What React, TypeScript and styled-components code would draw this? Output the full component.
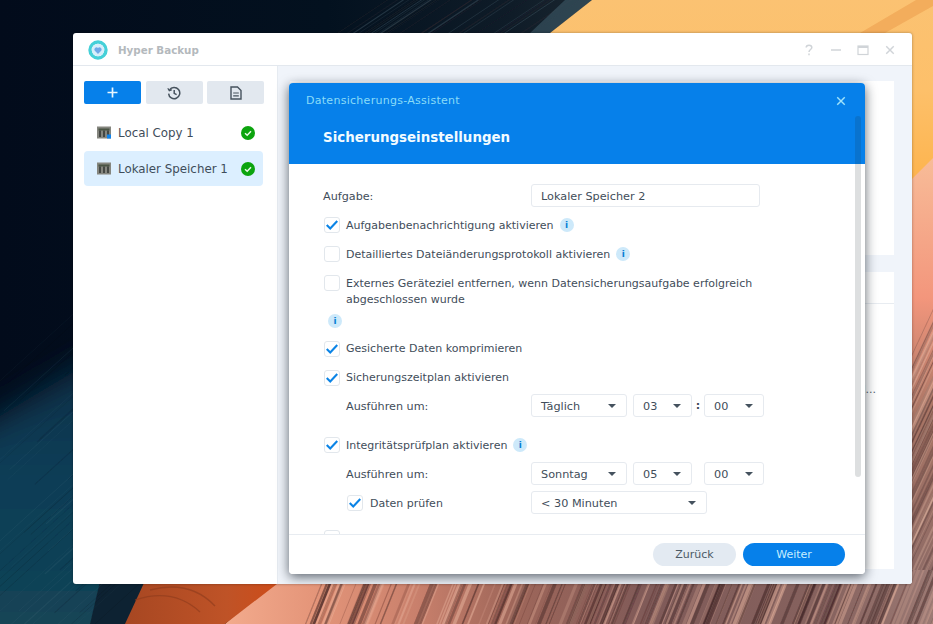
import React from "react";
import styled, { createGlobalStyle } from "styled-components";

const Global = createGlobalStyle`
  html, body { margin: 0; padding: 0; height: 100%; overflow: hidden; background: #03101f; }
  #root { height: 100%; }
  * { box-sizing: border-box; }
  body { font-family: "DejaVu Sans", Verdana, sans-serif; font-size: 12px; color: #3f4d5a; }
`;

const Desktop = styled.div`
  position: relative;
  width: 933px;
  height: 624px;
  overflow: hidden;
`;
const WallpaperSvg = styled.svg`
  position: absolute;
  inset: 0;
  display: block;
`;
const Win = styled.div`
  position: absolute;
  left: 73px;
  top: 33px;
  width: 839px;
  height: 551px;
  background: #fff;
  border-radius: 3px;
  display: flex;
  flex-direction: column;
  box-shadow: 0 0 3px rgba(0, 0, 0, 0.35);
  overflow: hidden;
`;
const TitleBar = styled.header`
  height: 33px;
  flex: none;
  display: flex;
  align-items: center;
  padding: 2px 15px 0 15px;
  gap: 10px;
  border-bottom: 1px solid #e3e8ee;
`;
const AppTitle = styled.span`
  font-size: 10.3px;
  font-weight: 700;
  color: #b4b9bd;
  flex: 1;
`;
const WinControls = styled.div`
  display: flex;
  align-items: center;
  gap: 13px;
`;
const WinBody = styled.div`
  flex: 1;
  display: flex;
  min-height: 0;
`;
const Sidebar = styled.aside`
  width: 205px;
  flex: none;
  padding: 15px 14px 0 11px;
  border-right: 1px solid #e6ebf1;
`;
const ToolRow = styled.div`
  display: grid;
  grid-template-columns: 57px 57px 57px;
  gap: 4.5px;
  margin-bottom: 11px;
`;
const ToolButton = styled.button<{ $primary?: boolean }>`
  height: 23px;
  border: 0;
  padding: 0;
  border-radius: 2px;
  display: flex;
  align-items: center;
  justify-content: center;
  background: ${(p) => (p.$primary ? "#0680ea" : "#e2e8ef")};
`;
const TaskItem = styled.div<{ $selected?: boolean }>`
  width: 179px;
  height: 35px;
  margin-bottom: 1px;
  padding: 0 8px 0 13px;
  border-radius: 4px;
  display: flex;
  align-items: center;
  gap: 7px;
  background: ${(p) => (p.$selected ? "#dcefff" : "transparent")};
`;
const TaskName = styled.span`
  flex: 1;
  font-size: 11.85px;
  white-space: nowrap;
  color: #3f4d5a;
`;
const Content = styled.main`
  flex: 1;
  background: #f0f4fa;
  padding: 15px 18px 15px 12px;
  display: flex;
  flex-direction: column;
  gap: 17px;
`;
const TopPanel = styled.section`
  height: 174px;
  flex: none;
  background: #fff;
`;
const BottomPanel = styled.section`
  flex: 1;
  background: #fff;
  padding-top: 31px;
`;
const PanelBody = styled.div`
  border-top: 1px solid #e8ecf1;
  padding: 79px 18px 0 0;
  text-align: right;
  font-size: 11px;
  line-height: 14px;
  color: #58656f;
`;

const Modal = styled.div`
  position: absolute;
  left: 216px;
  top: 50px;
  width: 576px;
  height: 491px;
  background: #fff;
  border-radius: 4px;
  display: flex;
  flex-direction: column;
  overflow: hidden;
  box-shadow: 0 3px 12px rgba(10, 20, 30, 0.65);
`;
const ModalHead = styled.header`
  height: 81px;
  flex: none;
  background: #0680ea;
  padding: 10px 17px 0 17px;
`;
const HeadTop = styled.div`
  display: flex;
  align-items: center;
  justify-content: space-between;
  height: 15px;
  font-size: 11px;
  letter-spacing: 0.28px;
  color: #8adcf8;
`;
const ModalTitle = styled.h1`
  margin: 20px 0 0 17px;
  font-size: 13.4px;
  line-height: 20px;
  font-weight: 700;
  color: #f2fbff;
`;
const Scrollbar = styled.div`
  position: absolute;
  top: 33px;
  right: 4px;
  width: 6px;
  height: 361px;
  border-radius: 3px;
  background: rgba(30, 40, 50, 0.15);
`;
const ModalBody = styled.div`
  flex: 1;
  min-height: 0;
  overflow: hidden;
  padding: 20px 34px 0;
  display: flex;
  flex-direction: column;
  gap: 6px;
`;
const FieldRow = styled.div<{ $gapTop?: number; $indent?: boolean }>`
  min-height: 23px;
  flex: none;
  display: flex;
  align-items: center;
  margin-top: ${(p) => p.$gapTop ?? 0}px;
  padding-left: ${(p) => (p.$indent ? "23px" : "0")};
`;
const CheckLine = styled.div<{ $nested?: boolean }>`
  display: flex;
  align-items: center;
  gap: 7px;
  width: ${(p) => (p.$nested ? "185px" : "auto")};
  padding-left: 1px;
`;
const Label = styled.span`
  font-size: 11px;
  line-height: 16px;
  padding-top: 2px;
  color: #3f4d5a;
  white-space: nowrap;
`;
const CheckLabel = styled(Label)<{ $flush?: boolean; $nested?: boolean }>`
  margin-left: ${(p) => (p.$nested ? "0" : "-1px")};
  padding-top: ${(p) => (p.$flush ? "0" : "2px")};
`;
const FieldLabel = styled(Label)`
  width: 208px;
  flex: none;
  font-size: 11.2px;
`;
const RunLabel = styled(Label)`
  width: 185px;
  flex: none;
  font-size: 11.2px;
`;
const BlockRow = styled.div`
  flex: none;
  display: grid;
  grid-template-columns: 16px 1fr;
  column-gap: 6px;
  padding: 4px 0 4px 1px;
`;
const BlockText = styled(Label)`
  white-space: normal;
  width: 420px;
  padding-top: 1px;
  margin-bottom: -1px;
`;
const BlockInfo = styled.div`
  grid-column: 1 / span 2;
  padding: 6px 0 0 5px;
  height: 20px;
`;
const Box = styled.span`
  width: 16px;
  height: 16px;
  flex: none;
  display: inline-flex;
  align-items: center;
  justify-content: center;
  background: #fff;
  border: 1px solid #e2e7ec;
  border-radius: 3px;
  overflow: visible;
`;
const InfoDot = styled.span`
  width: 14px;
  height: 14px;
  flex: none;
  display: inline-flex;
  align-items: center;
  justify-content: center;
  border-radius: 50%;
  background: #cde9fa;
  color: #0a7fd4;
  font-size: 9px;
  line-height: 14px;
  font-weight: 700;
  margin-left: -1px;
`;
const TextInput = styled.div`
  width: 229px;
  height: 23px;
  border: 1px solid #e6eaef;
  border-radius: 3px;
  padding: 1px 9px 0;
  display: flex;
  align-items: center;
  font-size: 11.25px;
  color: #3f4d5a;
`;
const SelectBox = styled.div<{ $w: number }>`
  width: ${(p) => p.$w}px;
  height: 23px;
  flex: none;
  border: 1px solid #e6eaef;
  border-radius: 3px;
  padding: 1px 10px 0 9px;
  display: flex;
  align-items: center;
  justify-content: space-between;
  font-size: 11.25px;
  color: #3f4d5a;
`;
const Caret = styled.span`
  width: 0;
  height: 0;
  margin-top: -1px;
  border-left: 4px solid transparent;
  border-right: 4px solid transparent;
  border-top: 4px solid #45525e;
`;
const SelectGroup = styled.div`
  display: flex;
  align-items: center;
`;
const TimeSep = styled.span<{ $hidden?: boolean }>`
  width: 12px;
  text-align: center;
  font-weight: 700;
  font-size: 11px;
  color: ${(p) => (p.$hidden ? "transparent" : "#3f4d5a")};
`;
const GapSix = styled.span`
  width: 6px;
`;
const ModalFoot = styled.footer`
  height: 40px;
  flex: none;
  border-top: 1px solid #e8ecf1;
  padding: 8px 20px 0 0;
  display: flex;
  justify-content: flex-end;
  align-items: flex-start;
  gap: 7px;
  background: #fff;
`;
const PillButton = styled.button<{ $primary?: boolean }>`
  height: 23px;
  width: ${(p) => (p.$primary ? 102 : 83)}px;
  border: 0;
  padding: 0;
  border-radius: 12px;
  font-family: inherit;
  font-size: 11px;
  background: ${(p) => (p.$primary ? "#0680ea" : "#e3eaf2")};
  color: ${(p) => (p.$primary ? "#c6eeff" : "#4c5a66")};
`;
const CloseIcon = styled.svg`
  display: block;
  margin: 0 2px;
`;

/* ---------- drawings ---------- */

function rng(seed: number) {
  let s = seed;
  return () => {
    s = (s * 1664525 + 1013904223) % 4294967296;
    return s / 4294967296;
  };
}

function Wallpaper() {
  const r = rng(11);
  const warm: React.ReactNode[] = [];
  for (let i = 0; i < 230; i++) {
    const x = 290 + r() * 760;
    const w = 0.5 + r() * 3.2;
    const dark = r() > 0.45;
    warm.push(
      <line
        key={i}
        x1={x}
        y1={640}
        x2={x + 32}
        y2={560}
        stroke={dark ? "#33191a" : "#edb8a2"}
        strokeWidth={w}
        strokeOpacity={0.15 + r() * 0.35}
      />
    );
  }
  const side: React.ReactNode[] = [];
  for (let i = 0; i < 90; i++) {
    const y = 370 + r() * 280;
    side.push(
      <line
        key={i}
        x1={905}
        y1={y}
        x2={940}
        y2={y - 75}
        stroke={r() > 0.5 ? "#4a3030" : "#e6b8a6"}
        strokeWidth={0.5 + r() * 1.6}
        strokeOpacity={0.3}
      />
    );
  }
  const cool: React.ReactNode[] = [];
  for (let i = 0; i < 45; i++) {
    const x = r() * 120 - 40;
    const y = 300 + r() * 300;
    cool.push(
      <line
        key={i}
        x1={x}
        y1={y + 70}
        x2={x + 110}
        y2={y - 30}
        stroke={r() > 0.4 ? "#4f7484" : "#041424"}
        strokeWidth={0.4 + r() * 0.8}
        strokeOpacity={0.16}
      />
    );
  }
  const top: React.ReactNode[] = [];
  for (let i = 0; i < 30; i++) {
    const x = 330 + r() * 200;
    top.push(
      <line
        key={i}
        x1={x}
        y1={36}
        x2={x + 60}
        y2={-4}
        stroke={r() > 0.5 ? "#4a6470" : "#2e2830"}
        strokeWidth={0.4 + r() * 0.8}
        strokeOpacity={0.4}
      />
    );
  }
  return (
    <WallpaperSvg width="933" height="624" viewBox="0 0 933 624">
      <defs>
        <linearGradient id="navy" x1="0" y1="0" x2="1" y2="0">
          <stop offset="0" stopColor="#020b1b" />
          <stop offset="0.35" stopColor="#03111f" />
          <stop offset="0.55" stopColor="#0f1c28" />
          <stop offset="0.65" stopColor="#1c2831" />
        </linearGradient>
        <linearGradient id="teal" x1="0" y1="0" x2="0" y2="1">
          <stop offset="0" stopColor="#0a3048" />
          <stop offset="0.4" stopColor="#0c3d56" />
          <stop offset="1" stopColor="#154656" />
        </linearGradient>
        <linearGradient id="orange" x1="0" y1="0" x2="0" y2="1">
          <stop offset="0" stopColor="#fbc272" />
          <stop offset="0.5" stopColor="#fdc06a" />
          <stop offset="1" stopColor="#fdb44e" />
        </linearGradient>
        <linearGradient id="peach" x1="0" y1="0" x2="0" y2="1">
          <stop offset="0" stopColor="#f8bc98" />
          <stop offset="0.3" stopColor="#f3967c" />
          <stop offset="0.55" stopColor="#a87565" />
          <stop offset="1" stopColor="#866866" />
        </linearGradient>
        <linearGradient id="rock" x1="0" y1="0" x2="1" y2="0">
          <stop offset="0" stopColor="#f3ab8d" />
          <stop offset="0.12" stopColor="#e5967a" />
          <stop offset="0.27" stopColor="#c9806c" />
          <stop offset="0.4" stopColor="#a0675a" />
          <stop offset="0.6" stopColor="#7f5a58" />
          <stop offset="0.85" stopColor="#86625e" />
          <stop offset="1" stopColor="#9c7a74" />
        </linearGradient>
        <linearGradient id="ember" x1="0" y1="0" x2="1" y2="0">
          <stop offset="0" stopColor="#a74722" />
          <stop offset="0.6" stopColor="#bf5327" />
          <stop offset="1" stopColor="#d34a14" />
        </linearGradient>
        <filter id="soft">
          <feGaussianBlur stdDeviation="0.5" />
        </filter>
        <filter id="haze" x="-40%" y="-40%" width="180%" height="180%">
          <feGaussianBlur stdDeviation="16" />
        </filter>
      </defs>
      <rect width="933" height="624" fill="url(#navy)" />
      <polygon points="-40,440 110,350 130,660 -40,660" fill="url(#teal)" filter="url(#haze)" />
      <polygon points="105,560 160,560 125,624 90,624" fill="#0f2333" filter="url(#soft)" />
      <g filter="url(#soft)">{cool}</g>
      <g filter="url(#soft)">{top}</g>
      <polygon points="565,0 592,0 550,33 530,33" fill="#3d5a68" opacity="0.6" filter="url(#soft)" />
      <polygon points="592,0 933,0 933,160 912,180 500,180 550,33" fill="url(#orange)" />
      <polygon points="860,33 933,-10 933,6 885,33" fill="#f3ad5c" filter="url(#soft)" />
      <polygon points="905,186 933,158 933,624 905,624" fill="url(#peach)" />
      <g filter="url(#soft)">{side}</g>
      <polygon points="285,570 933,570 933,624 225,624" fill="url(#rock)" />
      <clipPath id="rockClip">
        <polygon points="285,570 933,570 933,624 225,624" />
      </clipPath>
      <g clipPath="url(#rockClip)">
        <g filter="url(#soft)">{warm}</g>
      </g>
      <polygon points="150,570 295,570 225,624 125,624" fill="url(#ember)" />
      <path d="M135 600 C165 590 185 598 200 612 M150 590 C180 582 200 590 215 606" stroke="#8c3a1d" strokeWidth="1.4" fill="none" opacity="0.6" />
    </WallpaperSvg>
  );
}

const AppLogo = () => (
  <svg width="20" height="20" viewBox="0 0 20 20">
    <circle cx="10" cy="10" r="8" fill="none" stroke="#45d0d8" strokeWidth="3.4" />
    <circle cx="10" cy="10" r="6.2" fill="#d6eefa" />
    <path d="M10 14 L6.6 10.4 A2.1 2.1 0 0 1 10 8 A2.1 2.1 0 0 1 13.4 10.4 Z" fill="#6fa9e8" />
  </svg>
);

const Help = () => (
  <svg width="14" height="14" viewBox="0 0 14 14" fill="none" stroke="#d0d4d8" strokeWidth="1.5">
    <path d="M4.2 4.5 C4.2 1.5 9.8 1.5 9.8 4.5 C9.8 6.5 7 6.5 7 9" />
    <path d="M7 10.5 V12.3" />
  </svg>
);
const Minimize = () => (
  <svg width="14" height="14" viewBox="0 0 14 14" stroke="#d0d4d8" strokeWidth="1.5">
    <path d="M2 7 H12" />
  </svg>
);
const Maximize = () => (
  <svg width="14" height="14" viewBox="0 0 14 14" fill="none" stroke="#d0d4d8" strokeWidth="1.2">
    <rect x="2" y="3" width="10" height="8.5" />
    <path d="M2 4 H12" strokeWidth="2" />
  </svg>
);
const CloseGlyph = ({ color, size }: { color: string; size: number }) => (
  <CloseIcon width={size} height={size} viewBox="0 0 12 12" stroke={color} strokeWidth="1.7">
    <path d="M1.5 1.5 L10.5 10.5 M10.5 1.5 L1.5 10.5" />
  </CloseIcon>
);
const Plus = () => (
  <svg width="11" height="11" viewBox="0 0 11 11" stroke="#e8f6ff" strokeWidth="1.7">
    <path d="M5.5 0.5 V10.5 M0.5 5.5 H10.5" />
  </svg>
);
const History = () => (
  <svg width="14" height="14" viewBox="0 0 14 14" fill="none" stroke="#46525d" strokeWidth="1.5">
    <path d="M2.5 4 A5.6 5.6 0 1 1 1.6 7.6" />
    <path d="M0.8 2.2 L2.3 4.8 L5 3.8" strokeWidth="1.2" />
    <path d="M7.2 4 V7.4 L9.6 8.6" />
  </svg>
);
const LogDoc = () => (
  <svg width="12" height="14" viewBox="0 0 12 14" fill="none" stroke="#46525d" strokeWidth="1.4">
    <path d="M1 1 H7.5 L11 4.5 V13 H1 Z" />
    <path d="M3.2 7 H8.8 M3.2 9.8 H8.8" strokeWidth="1.2" />
  </svg>
);
const RackIcon = ({ copy }: { copy?: boolean }) => (
  <svg width="14" height="13" viewBox="0 0 14 13">
    <rect width="14" height="12" y="0.5" fill="#85867f" />
    <rect x="1.5" y="2.5" width="11" height="2" fill="#4a5444" />
    <path d="M3 4.5 V11 M7 4.5 V11 M11 4.5 V11" stroke="#3a3e3a" strokeWidth="1.7" />
    {copy && <rect x="10" y="8.5" width="4" height="4" fill="#0f84ee" />}
  </svg>
);
const OkBadge = () => (
  <svg width="14" height="14" viewBox="0 0 14 14">
    <circle cx="7" cy="7" r="7" fill="#0ca40e" />
    <path d="M4 7.2 L6.2 9.2 L10 5.3" fill="none" stroke="#eafbe8" strokeWidth="1.5" />
  </svg>
);
const Tick = () => (
  <svg width="16" height="14" viewBox="0 0 16 14" fill="none" stroke="#0b84e6" strokeWidth="2.4">
    <path d="M2 7 L6 11 L14 2.5" />
  </svg>
);

const Check = ({ on }: { on?: boolean }) => <Box>{on && <Tick />}</Box>;
const Info = () => <InfoDot>i</InfoDot>;

function Select({ w, value }: { w: number; value: string }) {
  return (
    <SelectBox $w={w}>
      <span>{value}</span>
      <Caret />
    </SelectBox>
  );
}

export default function App() {
  return (
    <Desktop>
      <Global />
      <Wallpaper />
      <Win>
        <TitleBar>
          <AppLogo />
          <AppTitle>Hyper Backup</AppTitle>
          <WinControls>
            <Help />
            <Minimize />
            <Maximize />
            <CloseGlyph color="#d0d4d8" size={10} />
          </WinControls>
        </TitleBar>
        <WinBody>
          <Sidebar>
            <ToolRow>
              <ToolButton $primary><Plus /></ToolButton>
              <ToolButton><History /></ToolButton>
              <ToolButton><LogDoc /></ToolButton>
            </ToolRow>
            <TaskItem>
              <RackIcon copy />
              <TaskName>Local Copy 1</TaskName>
              <OkBadge />
            </TaskItem>
            <TaskItem $selected>
              <RackIcon />
              <TaskName>Lokaler Speicher 1</TaskName>
              <OkBadge />
            </TaskItem>
          </Sidebar>
          <Content>
            <TopPanel />
            <BottomPanel>
              <PanelBody>l...</PanelBody>
            </BottomPanel>
          </Content>
        </WinBody>
        <Modal>
          <ModalHead>
            <HeadTop>
              <span>Datensicherungs-Assistent</span>
              <CloseGlyph color="#9fe2fb" size={10} />
            </HeadTop>
            <ModalTitle>Sicherungseinstellungen</ModalTitle>
          </ModalHead>
          <ModalBody>
            <FieldRow>
              <FieldLabel>Aufgabe:</FieldLabel>
              <TextInput>Lokaler Speicher 2</TextInput>
            </FieldRow>
            <FieldRow>
              <CheckLine>
                <Check on />
                <CheckLabel>Aufgabenbenachrichtigung aktivieren</CheckLabel>
                <Info />
              </CheckLine>
            </FieldRow>
            <FieldRow>
              <CheckLine>
                <Check />
                <CheckLabel>Detailliertes Dateiänderungsprotokoll aktivieren</CheckLabel>
                <Info />
              </CheckLine>
            </FieldRow>
            <BlockRow>
              <Check />
              <BlockText>
                Externes Geräteziel entfernen, wenn Datensicherungsaufgabe erfolgreich abgeschlossen wurde
              </BlockText>
              <BlockInfo><Info /></BlockInfo>
            </BlockRow>
            <FieldRow>
              <CheckLine>
                <Check on />
                <CheckLabel $flush>Gesicherte Daten komprimieren</CheckLabel>
              </CheckLine>
            </FieldRow>
            <FieldRow>
              <CheckLine>
                <Check on />
                <CheckLabel $flush>Sicherungszeitplan aktivieren</CheckLabel>
              </CheckLine>
            </FieldRow>
            <FieldRow $indent $gapTop={-1}>
              <RunLabel>Ausführen um:</RunLabel>
              <SelectGroup>
                <Select w={96} value="Täglich" />
                <GapSix />
                <Select w={59} value="03" />
                <TimeSep>:</TimeSep>
                <Select w={60} value="00" />
              </SelectGroup>
            </FieldRow>
            <FieldRow $gapTop={10}>
              <CheckLine>
                <Check on />
                <CheckLabel>Integritätsprüfplan aktivieren</CheckLabel>
                <Info />
              </CheckLine>
            </FieldRow>
            <FieldRow $indent>
              <RunLabel>Ausführen um:</RunLabel>
              <SelectGroup>
                <Select w={96} value="Sonntag" />
                <GapSix />
                <Select w={59} value="05" />
                <TimeSep $hidden>:</TimeSep>
                <Select w={60} value="00" />
              </SelectGroup>
            </FieldRow>
            <FieldRow $indent>
              <CheckLine $nested>
                <Check on />
                <CheckLabel $nested>Daten prüfen</CheckLabel>
              </CheckLine>
              <Select w={176} value="< 30 Minuten" />
            </FieldRow>
            <FieldRow $gapTop={6}>
              <CheckLine>
                <Check />
                <CheckLabel>Clientseitige Verschlüsselung</CheckLabel>
              </CheckLine>
            </FieldRow>
          </ModalBody>
          <ModalFoot>
            <PillButton>Zurück</PillButton>
            <PillButton $primary>Weiter</PillButton>
          </ModalFoot>
          <Scrollbar />
        </Modal>
      </Win>
    </Desktop>
  );
}
